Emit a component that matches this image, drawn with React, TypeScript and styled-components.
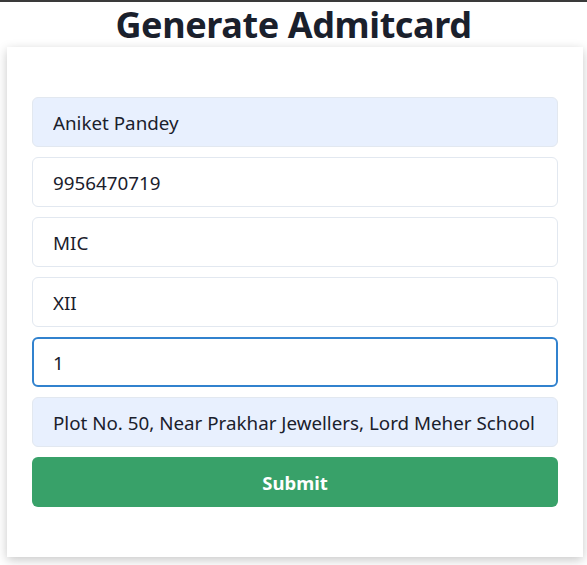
import React from "react";
import styled, { createGlobalStyle } from "styled-components";

const Global = createGlobalStyle`
  html, body { margin: 0; padding: 0; background: #ffffff; min-height: 565px; }
  body { font-family: "Noto Sans", "Open Sans", sans-serif; color: #1a202c; }
  * { box-sizing: border-box; }
`;

const Page = styled.div`
  border-top: 2px solid #3a3a3a;
  display: flex;
  flex-direction: column;
  align-items: center;
`;

const Title = styled.h1`
  margin: 0;
  font-size: 36px;
  font-weight: 700;
  line-height: 45px;
  color: #1a202c;
  letter-spacing: -0.4px;
`;

const Card = styled.div`
  width: 576px;
  margin-left: 7px;
  align-self: flex-start;
  background: #ffffff;
  box-shadow: 0 3px 10px rgba(0, 0, 0, 0.22);
  padding: 50px 25px 50px;
`;

const Form = styled.form`
  display: flex;
  flex-direction: column;
  gap: 10px;
`;

const Field = styled.input<{ $filled?: boolean; $focused?: boolean }>`
  height: 50px;
  width: 100%;
  border-radius: 6px;
  border: ${(p) => (p.$focused ? "2px solid #3182ce" : "1px solid #e2e8f0")};
  background: ${(p) => (p.$filled ? "#e8f0fe" : "#ffffff")};
  padding: 2px ${(p) => (p.$focused ? "19px" : "20px")} 0;
  font-family: "Noto Sans", "Open Sans", sans-serif;
  font-size: 18.8px;
  color: #1a202c;
  outline: none;
`;

const Button = styled.button`
  height: 50px;
  width: 100%;
  border: none;
  border-radius: 6px;
  background: #38a169;
  color: #ffffff;
  font-family: "Noto Sans", "Open Sans", sans-serif;
  font-weight: 700;
  font-size: 18.5px;
`;

export default function App() {
  return (
    <>
      <Global />
      <Page>
        <Title>Generate Admitcard</Title>
        <Card>
          <Form onSubmit={(e) => e.preventDefault()}>
            <Field $filled defaultValue="Aniket Pandey" />
            <Field defaultValue="9956470719" />
            <Field defaultValue="MIC" />
            <Field defaultValue="XII" />
            <Field $focused defaultValue="1" />
            <Field $filled defaultValue="Plot No. 50, Near Prakhar Jewellers, Lord Meher School" />
            <Button type="submit">Submit</Button>
          </Form>
        </Card>
      </Page>
    </>
  );
}
